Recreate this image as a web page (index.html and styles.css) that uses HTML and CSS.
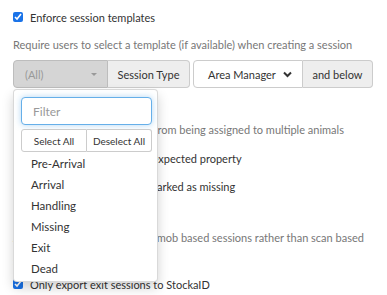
FILE: index.html
```html
<!DOCTYPE html>
<html lang="en">
<head>
    <meta charset="UTF-8">
    <title>Session settings</title>
    <link rel="stylesheet" href="styles.css">
</head>
<body>
    <div class="settings">
        <label class="check-row">
            <input type="checkbox" checked>
            <span>Enforce session templates</span>
        </label>
        <div class="help">Require users to select a template (if available) when creating a session</div>

        <div class="input-row">
            <div class="group">
                <div class="select-wrap">
                    <div class="fake-select disabled">(All) <span class="caret"></span></div>

                    <div class="dropdown">
                        <input class="filter" type="text" placeholder="Filter">
                        <div class="btn-group">
                            <button class="btn">Select All</button>
                            <button class="btn">Deselect All</button>
                        </div>
                        <ul class="options">
                            <li>Pre-Arrival</li>
                            <li>Arrival</li>
                            <li>Handling</li>
                            <li>Missing</li>
                            <li>Exit</li>
                            <li>Dead</li>
                        </ul>
                    </div>
                </div>
                <div class="addon type">Session Type</div>
            </div>
            <div class="group">
                <div class="fake-select role">Area Manager
                    <svg class="chev" width="9" height="7" viewBox="0 0 9 7"><path d="M1 1.5 L4.5 5 L8 1.5" fill="none" stroke="#333" stroke-width="2"/></svg>
                </div>
                <div class="addon below">and below</div>
            </div>
        </div>

        <label class="check-row">
            <input type="checkbox">
            <span>Enforce unique tags</span>
        </label>
        <div class="help">Prevent a single NLIS ear tag from being assigned to multiple animals</div>

        <label class="check-row">
            <input type="checkbox" checked>
            <span>Warn for animals from unexpected property</span>
        </label>
        <label class="check-row">
            <input type="checkbox" checked>
            <span>Notify when livestock is marked as missing</span>
        </label>
        <label class="check-row tight">
            <input type="checkbox">
            <span>Mob sessions</span>
        </label>
        <div class="help tight">Allow users to create and run mob based sessions rather than scan based</div>
        <div class="help tight">sessions</div>

        <label class="check-row">
            <input type="checkbox" checked>
            <span>Only export exit sessions to StockaID</span>
        </label>
    </div>
</body>
</html>
```

FILE: styles.css
```css
* {
    box-sizing: border-box;
}

body {
    margin: 0;
    font-family: 'Lato', 'Liberation Sans', sans-serif;
    font-size: 11px;
    color: #333;
    background: #fff;
    overflow: hidden;
}

.settings {
    padding: 7px 13px 0 13px;
}

.check-row {
    display: flex;
    align-items: center;
    gap: 7px;
    height: 20px;
    margin-bottom: 8px;
    white-space: nowrap;
}

.check-row input {
    margin: 0;
    width: 10px;
    height: 10px;
    accent-color: #1a73e8;
}

.help {
    color: #777;
    line-height: 20px;
    margin-bottom: 8px;
    white-space: nowrap;
}

.check-row.tight {
    margin-bottom: 4px;
}

.help.tight {
    margin-bottom: 3px;
}

.settings > .help:nth-child(2) {
    margin-bottom: 5px;
}

.input-row {
    display: flex;
    gap: 3px;
    margin-bottom: 4px;
}

.group {
    display: flex;
    height: 28px;
}

.select-wrap {
    position: relative;
}

.fake-select {
    height: 28px;
    display: flex;
    align-items: center;
    border: 1px solid #ccc;
    border-radius: 4px 0 0 4px;
    white-space: nowrap;
}

.fake-select.disabled {
    width: 95px;
    background: #d5d5d5;
    border-color: #bdbdbd;
    color: #999;
    padding: 0 10px 0 11px;
}

.caret {
    margin-left: auto;
    border-left: 3px solid transparent;
    border-right: 3px solid transparent;
    border-top: 3px solid #999;
}

.fake-select.role {
    width: 110px;
    background: #fff;
    padding: 0 10px 0 14px;
}

.chev {
    margin-left: auto;
}

.addon {
    display: flex;
    align-items: center;
    justify-content: center;
    background: #eee;
    border: 1px solid #ccc;
    border-left: none;
    border-radius: 0 4px 4px 0;
    white-space: nowrap;
}

.addon.type {
    width: 82px;
}

.addon.below {
    width: 70px;
}

.dropdown {
    position: absolute;
    top: 29px;
    left: 0;
    width: 145px;
    background: #fff;
    border: 1px solid rgba(0, 0, 0, 0.15);
    border-radius: 4px;
    box-shadow: 0 6px 12px rgba(0, 0, 0, 0.175);
    padding: 7px 6px 2px 7px;
    z-index: 10;
}

.filter {
    display: block;
    width: 131px;
    height: 28px;
    border: 1px solid #66afe9;
    border-radius: 4px;
    box-shadow: 0 0 6px rgba(102, 175, 233, 0.5);
    padding: 0 11px;
    font-family: inherit;
    font-size: 12px;
    outline: none;
}

.filter::placeholder {
    color: #999;
}

.btn-group {
    display: flex;
    width: 131px;
    margin-top: 4px;
}

.btn {
    flex: 1;
    height: 23px;
    background: #fff;
    border: 1px solid #ccc;
    font-family: inherit;
    font-size: 10px;
    color: #333;
    padding: 0;
}

.btn:first-child {
    border-radius: 3px 0 0 3px;
}

.btn:last-child {
    border-left: none;
    border-radius: 0 3px 3px 0;
}

.options {
    list-style: none;
    margin: 1px 0 0 0;
    padding: 0;
    font-size: 11.5px;
}

.options li {
    height: 21px;
    line-height: 21px;
    padding-left: 10px;
}
```
